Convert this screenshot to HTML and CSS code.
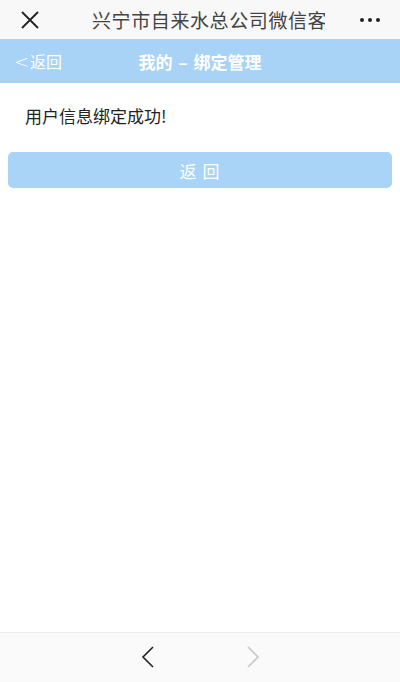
FILE: index.html
```html
<!DOCTYPE html>
<html lang="zh-CN">
<head>
<meta charset="utf-8">
<link rel="stylesheet" href="styles.css">
</head>
<body>
<div class="page">
  <header class="wx-bar">
    <svg class="close" width="20" height="20" viewBox="0 0 20 20"><path d="M2 2 L18 18 M18 2 L2 18" stroke="#222" stroke-width="1.8" fill="none"/></svg>
    <div class="wx-title">兴宁市自来水总公司微信客</div>
    <div class="dots"><span></span><span></span><span></span></div>
  </header>
  <nav class="nav">
    <span class="back"><span class="lt">&lt;</span>返回</span>
    <span class="nav-title">我的 – 绑定管理</span>
  </nav>
  <main class="content">
    <p class="msg">用户信息绑定成功!</p>
    <div class="btn">返 回</div>
  </main>
  <footer class="toolbar">
    <svg width="14" height="22" viewBox="0 0 14 22"><path d="M12 1 L2 11 L12 21" stroke="#222" stroke-width="1.6" fill="none"/></svg>
    <svg width="14" height="22" viewBox="0 0 14 22"><path d="M2 1 L12 11 L2 21" stroke="#c8c8c8" stroke-width="1.6" fill="none"/></svg>
  </footer>
</div>
</body>
</html>
```
FILE: styles.css
```css
* { box-sizing: border-box; }
html, body { margin: 0; padding: 0; }
body {
  font-family: "Noto Sans CJK SC", "Noto Sans", sans-serif;
  background: #fff;
}
.page {
  width: 400px;
  height: 682px;
  display: flex;
  flex-direction: column;
  overflow: hidden;
}
.wx-bar {
  height: 39px;
  display: flex;
  align-items: center;
  background: #f8f8f8;
  padding: 0 20px 0 20px;
}
.close { flex: none; }
.wx-title {
  width: 233px;
  margin-left: 52px;
  font-size: 19px;
  color: #444;
  white-space: nowrap;
  overflow: hidden;
  letter-spacing: 0.6px;
  line-height: 39px;
}
.dots {
  margin-left: auto;
  display: flex;
  gap: 4px;
}
.dots span {
  width: 4px; height: 4px; border-radius: 50%; background: #222;
}
.nav {
  height: 44px;
  background: #a8d3f6;
  display: flex;
  align-items: center;
  position: relative;
  color: #fff;
  font-size: 16px;
}
.back { margin-left: 14px; display: flex; align-items: center; }
.lt {
  font-family: "DejaVu Sans", sans-serif;
  font-weight: 300;
  font-size: 18px;
  margin-right: 1px;
}
.nav-title {
  position: absolute;
  left: 0; right: 0;
  text-align: center;
  font-weight: bold;
  font-size: 17px;
  word-spacing: 2px;
  pointer-events: none;
}
.content {
  flex: 1;
  padding: 0 8px;
}
.msg {
  margin: 20px 0 0 17px;
  font-size: 17px;
  color: #222;
  line-height: 26px;
}
.btn {
  margin-top: 23px;
  height: 36px;
  border-radius: 5px;
  background: #a9d4f7;
  color: #fff;
  font-size: 17px;
  display: flex;
  align-items: center;
  justify-content: center;
  letter-spacing: 1px;
}
.toolbar {
  height: 50px;
  background: #fafafa;
  border-top: 1px solid #ececec;
  display: flex;
  align-items: center;
  justify-content: center;
  gap: 91px;
  padding-bottom: 1px;
}
```
